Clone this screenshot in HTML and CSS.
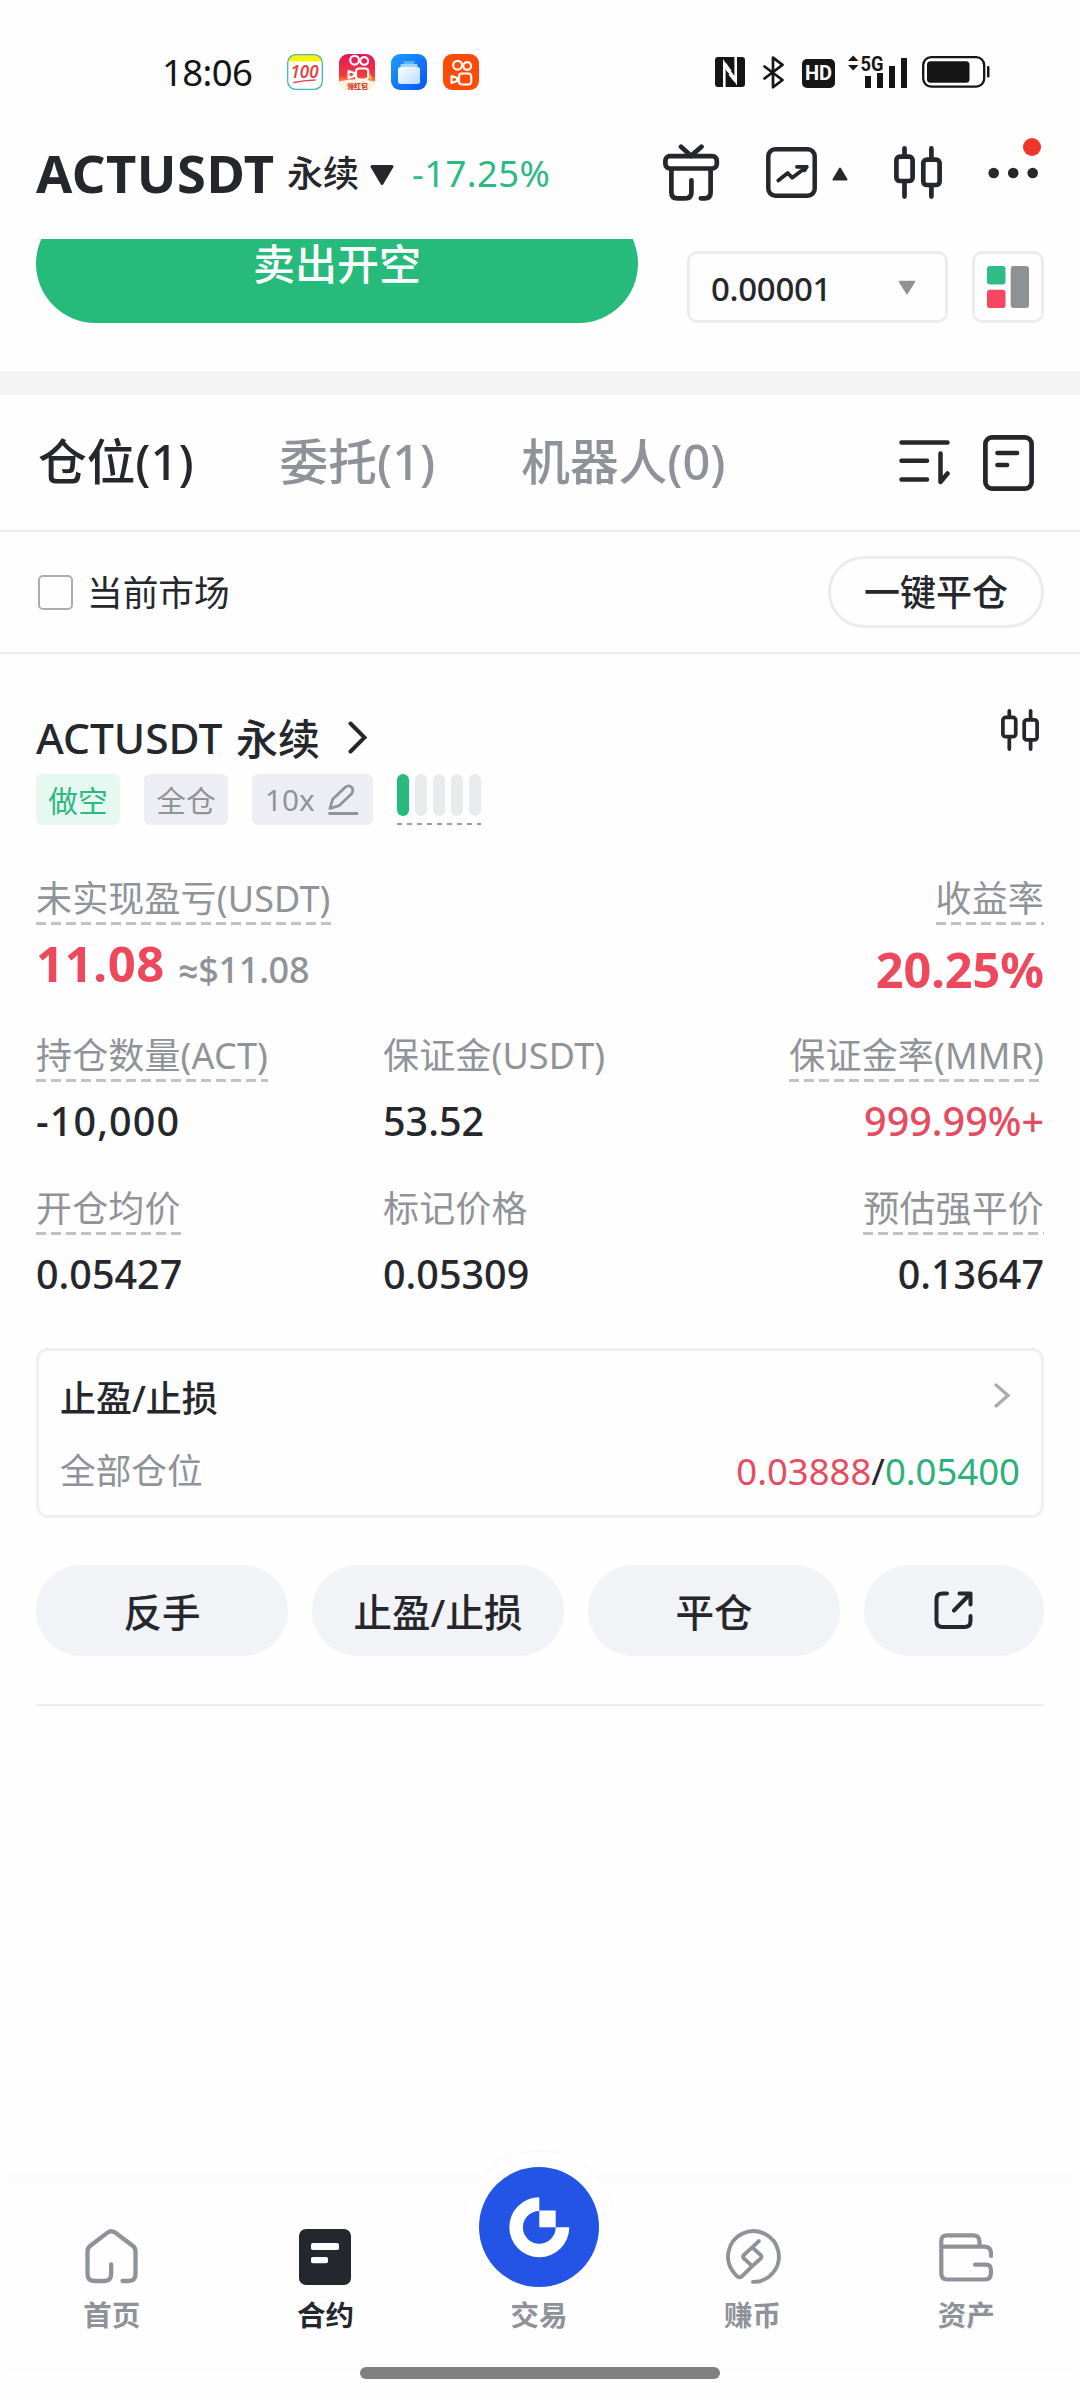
FILE: index.html
```html
<!DOCTYPE html>
<html lang="zh-CN">
<head>
<meta charset="utf-8">
<title>ACTUSDT 永续</title>
<link rel="stylesheet" href="styles.css">
</head>
<body>
<svg class="defs" width="0" height="0" aria-hidden="true">
  <symbol id="candles" viewBox="0 0 48 53">
    <g fill="none" stroke="currentColor" stroke-width="4.7" stroke-linecap="round">
      <rect x="2.4" y="10.6" width="16.2" height="24.4" rx="3.5"/>
      <rect x="29.3" y="13.6" width="16.3" height="25.4" rx="3.5"/>
      <path d="M10.5 2.4V9M10.5 37v13.6M37.4 2.4V12M37.4 41v9.6"/>
    </g>
  </symbol>
  <symbol id="camera" viewBox="0 0 36 35">
    <g fill="none" stroke="#fff" stroke-width="2.2" stroke-linejoin="round">
      <circle cx="14.6" cy="10.2" r="4.4"/>
      <circle cx="24.2" cy="11" r="3.9"/>
      <rect x="16" y="18.500" width="12.2" height="11" rx="3"/>
      <path d="M8.600 21v7l5.600-2v-3z"/>
    </g>
  </symbol>
</svg>

<div class="status">
  <span class="clock">18:06</span>
  <div class="apps">
    <svg width="36" height="36" viewBox="0 0 36 36">
      <rect x=".7" y=".7" width="34.6" height="34.6" rx="8" fill="#fff"/>
      <path d="M1 7.5V7a6.500 6.500 0 0 1 6.500-6.500h21A6.500 6.500 0 0 1 35 7v.5z" fill="#fbf500"/>
      <rect x=".7" y=".7" width="34.600" height="34.600" rx="8" fill="none" stroke="#45b5be" stroke-width="1.300"/>
      <text class="hundred" x="17.500" y="24" text-anchor="middle">100</text>
      <path d="M7 28.500q10-2 21-2.500" fill="none" stroke="#e04848" stroke-width="1.500" stroke-linecap="round"/>
    </svg>
    <svg width="36" height="36" viewBox="0 0 36 36">
      <defs><linearGradient id="gr" x1="0" y1="0" x2="0" y2="1"><stop offset="0" stop-color="#e6145a"/><stop offset=".6" stop-color="#f23a3c"/><stop offset=".8" stop-color="#fb9a4c"/></linearGradient></defs>
      <rect width="36" height="36" rx="9" fill="url(#gr)"/>
      <path d="M0 27.500q18-4.500 36 0a9 8 0 0 1-9 8.500H9a9 8 0 0 1-9-8.500z" fill="#fff3e0"/>
      <use href="#camera" x="1" y="-4" width="36" height="35"/>
      <path d="M32 20l-3 4h2l-1 3 4-4h-2z" fill="#ffc23c"/>
      <text class="tiny" x="18.500" y="34.500" text-anchor="middle">领红包</text>
    </svg>
    <svg width="36" height="36" viewBox="0 0 36 36">
      <defs>
        <linearGradient id="gb" x1="0" y1="0" x2="1" y2="1"><stop offset="0" stop-color="#1f9dfc"/><stop offset="1" stop-color="#0a53fb"/></linearGradient>
        <linearGradient id="gw" x1="0" y1="0" x2="1" y2="1"><stop offset="0" stop-color="#fff"/><stop offset="1" stop-color="#b9dcff"/></linearGradient>
      </defs>
      <rect width="36" height="36" rx="9" fill="url(#gb)"/>
      <rect x="12.500" y="7" width="11" height="3" rx="1" fill="#5cb4fd"/>
      <rect x="9.500" y="10" width="17" height="3" rx="1" fill="#a5d4fe"/>
      <rect x="7" y="13" width="22" height="17" rx="2.500" fill="url(#gw)"/>
    </svg>
    <svg width="36" height="36" viewBox="0 0 36 36">
      <rect width="36" height="36" rx="9" fill="#fc4b08"/>
      <use href="#camera" width="36" height="35" y="1"/>
    </svg>
  </div>
  <div class="signals">
    <svg width="30" height="30" viewBox="0 0 30 30">
      <rect width="30" height="30" rx="3" fill="#151515"/>
      <path d="M9.300 30V6.500L20.700 24V0" fill="none" stroke="#fefefe" stroke-width="2.600"/>
      <path d="M9.300 7l5.700 8M15 16.500l5.700 7" stroke="#fefefe" stroke-width="4"/>
    </svg>
    <svg class="bt" width="22" height="33" viewBox="0 0 22 33">
      <path d="M1.500 10.500L19.500 24 10 31.300V1.700l9.500 7.200L1.500 22.500" fill="none" stroke="#151515" stroke-width="2.700" stroke-linejoin="round" stroke-linecap="round"/>
    </svg>
    <span class="hd">HD</span>
    <svg class="cell" width="62" height="45" viewBox="0 -6 62 45">
      <path d="M2 6l5.200-5.500L12.500 6zM2 10l5.200 5.500L12.500 10z" fill="#151515"/>
      <text class="gen" x="14.500" y="15.500" textLength="23" lengthAdjust="spacingAndGlyphs">5G</text>
      <path d="M19 21h6v12h-6zM31 18h6v15h-6zM43 11h6v22h-6zM55 3h6v30h-6z" fill="#151515"/>
    </svg>
    <svg width="68" height="32" viewBox="0 0 68 32">
      <rect x="1.200" y="1.200" width="61" height="29.400" rx="8" fill="none" stroke="#151515" stroke-width="2.300"/>
      <rect x="5" y="5.300" width="42.500" height="21.400" rx="3.500" fill="#151515"/>
      <rect x="65" y="10" width="2.500" height="11.500" rx="1" fill="#151515"/>
    </svg>
  </div>
</div>

<div class="header">
  <span class="symbol">ACTUSDT</span>
  <span class="kind">永续</span>
  <svg class="caret" width="26" height="22" viewBox="0 0 26 22"><path d="M3 2.500h20L13 19.500z" fill="currentColor" stroke="currentColor" stroke-width="3" stroke-linejoin="round"/></svg>
  <span class="change">-17.25%</span>
  <svg class="gift" width="57" height="58" viewBox="0 0 57 58" fill="none" stroke="currentColor" stroke-width="4.700" stroke-linecap="round">
    <rect x="2.400" y="12.200" width="51.400" height="12.300" rx="4.500"/>
    <path d="M18 2.800l10 9 10.500-9M8.400 26v22.500q0 5.800 6 5.800h8q6 0 6-5.800V36.300M47.600 26v22.500q0 5.800-6 5.800h-3.800"/>
  </svg>
  <svg class="chart" width="51" height="51" viewBox="0 0 51 51" fill="none" stroke="currentColor" stroke-width="4.500" stroke-linecap="round" stroke-linejoin="round">
    <rect x="2.300" y="2.300" width="46.400" height="46.400" rx="7"/>
    <path stroke-width="3.800" d="M12.300 33.500l9.400-7.500 4.500 4.800L40.800 19.800H31M40.800 19.800l-2.300 3.500"/>
  </svg>
  <svg class="up" width="16" height="14" viewBox="0 0 16 14"><path d="M8 1.500l6.500 11h-13z" fill="currentColor" stroke="currentColor" stroke-width="2" stroke-linejoin="round"/></svg>
  <svg class="candle-icon" width="48" height="53"><use href="#candles" width="48" height="53"/></svg>
  <div class="more">
    <svg width="51" height="12" viewBox="0 0 51 12"><g fill="currentColor"><circle cx="5.700" cy="6" r="5.300"/><circle cx="25.200" cy="6" r="5.300"/><circle cx="44.700" cy="6" r="5.300"/></g></svg>
    <span class="badge"></span>
  </div>
</div>

<div class="trade">
  <div class="sell"><span>卖出开空</span></div>
  <div class="precision"><span>0.00001</span><svg width="18" height="15" viewBox="0 0 18 15"><path d="M1.500 1.500h15L9 13.500z" fill="#8e9297" stroke="#8e9297" stroke-width="1.500" stroke-linejoin="round"/></svg></div>
  <div class="bookmode">
    <svg width="42" height="42" viewBox="0 0 42 42"><rect width="18.500" height="18.500" rx="3" fill="#2ebd85"/><rect y="23.700" width="18.500" height="18.500" rx="3" fill="#f5475d"/><rect x="23.700" width="18.300" height="42" rx="3" fill="#8e9297"/></svg>
  </div>
</div>

<div class="band"></div>

<div class="tabs">
  <span class="tab active">仓位(1)</span>
  <span class="tab">委托(1)</span>
  <span class="tab">机器人(0)</span>
  <svg class="sort" width="51" height="47" viewBox="0 0 51 47" fill="none" stroke="currentColor" stroke-width="4.500" stroke-linecap="round" stroke-linejoin="round"><path d="M2.500 3.500h46M2.500 21.800H28M2.500 40.500H28M41.500 14.500v28.500l7-8.500"/></svg>
  <svg class="doc" width="51" height="56" viewBox="0 0 51 56" fill="none" stroke="currentColor" stroke-width="4.700" stroke-linecap="round"><rect x="2.400" y="2.400" width="46.200" height="51.200" rx="6.500"/><path d="M14.500 18H34M14.500 30H24"/></svg>
</div>

<div class="filter">
  <span class="check"></span>
  <span class="filter-label">当前市场</span>
  <span class="closeall">一键平仓</span>
</div>

<div class="position">
  <div class="title">
    <span class="name">ACTUSDT</span><span class="type">永续</span>
    <svg class="chev" width="20" height="33" viewBox="0 0 20 33"><path d="M2.500 2.500L16.500 16.500 2.500 30.500" fill="none" stroke="currentColor" stroke-width="4" stroke-linecap="round"/></svg>
    <svg class="mini" width="38" height="42"><use href="#candles" width="38" height="42"/></svg>
  </div>
  <div class="tags">
    <span class="tag short">做空</span>
    <span class="tag">全仓</span>
    <span class="tag lever">10x
      <svg width="31" height="32" viewBox="0 0 31 32" fill="none" stroke="currentColor" stroke-width="2.800" stroke-linecap="round" stroke-linejoin="round"><path d="M2 24.500l2.600-9.200L17.300 3.200q3.500-2.700 6.300 0 2.400 3 0 6.500L11 21.700zM1.500 29.500h27.500"/></svg>
    </span>
    <span class="risk"><i class="on"></i><i></i><i></i><i></i><i></i></span>
  </div>

  <div class="metrics first">
    <div class="metric"><span class="label dash">未实现盈亏(USDT)</span><span class="pnl"><b>11.08</b><span class="approx"><span class="sign">≈</span>$11.08</span></span></div>
    <div class="metric right"><span class="label dash">收益率</span><span class="roe">20.25%</span></div>
  </div>
  <div class="metrics">
    <div class="metric"><span class="label dash">持仓数量(ACT)</span><span class="value qty">-10,000</span></div>
    <div class="metric"><span class="label">保证金(USDT)</span><span class="value">53.52</span></div>
    <div class="metric right"><span class="label dash">保证金率(MMR)</span><span class="value red">999.99%+</span></div>
  </div>
  <div class="metrics">
    <div class="metric"><span class="label dash">开仓均价</span><span class="value">0.05427</span></div>
    <div class="metric"><span class="label">标记价格</span><span class="value">0.05309</span></div>
    <div class="metric right"><span class="label dash">预估强平价</span><span class="value">0.13647</span></div>
  </div>

  <div class="tpsl">
    <div class="row"><span class="strong">止盈/止损</span><svg class="go" width="17" height="25" viewBox="0 0 17 25"><path d="M2 2l12 10.500L2 23" fill="none" stroke="#a9abae" stroke-width="3.200" stroke-linecap="round"/></svg></div>
    <div class="row"><span class="muted">全部仓位</span><span class="prices"><span class="red">0.03888</span>/<span class="green">0.05400</span></span></div>
  </div>

  <div class="actions">
    <span class="btn">反手</span>
    <span class="btn">止盈/止损</span>
    <span class="btn">平仓</span>
    <span class="btn share">
      <svg width="40" height="39" viewBox="0 0 40 39" fill="none" stroke="currentColor" stroke-width="4" stroke-linecap="round" stroke-linejoin="round"><path d="M13 2.500H8.500q-6 0-6 6V30q0 6 6 6h22q6 0 6-6v-5M20 19.500L36.500 2.500M25.500 2.500h11v11"/></svg>
    </span>
  </div>
</div>

<div class="nav">
  <div class="item">
    <svg width="53" height="56" viewBox="0 0 53 56" fill="none" stroke="currentColor" stroke-width="4.300" stroke-linecap="round"><path d="M26.200 35.500V45q0 7-7 7H9.500q-7 0-7-7V22.500q0-3.500 2.500-5.500L22.500 3.600q3.800-2.800 7.600 0L48 17q2.500 2 2.500 5.500V45q0 7-7 7h-6"/></svg>
    <span>首页</span>
  </div>
  <div class="item current">
    <svg width="52" height="56" viewBox="0 0 52 56"><rect width="52" height="56" rx="7" fill="currentColor"/><rect x="12" y="14" width="28" height="7" rx="1.800" fill="#fefefe"/><rect x="12" y="28" width="17" height="6.300" rx="1.800" fill="#fefefe"/></svg>
    <span>合约</span>
  </div>
  <div class="item center">
    <div class="fab">
      <svg width="120" height="120" viewBox="0 0 120 120"><circle cx="60" cy="60" r="60" fill="#2354e6"/><path d="M60.300 30.300v13.600a16.400 16.400 0 1 0 16.400 16.400h13.600a30 30 0 1 1-30-30z" fill="#fff"/><path d="M60.300 43.500h16.400v16.800H60.300z" fill="#fff"/></svg>
    </div>
    <span>交易</span>
  </div>
  <div class="item">
    <svg width="58" height="58" viewBox="0 0 58 58" fill="none" stroke="currentColor" stroke-width="4" stroke-linecap="round" stroke-linejoin="round"><path d="M29 54.800A26.300 26.300 0 1 0 9 45l3 3.500q2.500 2.500 5.500.5L28.200 38.500 19.500 30.500q-1.600-1.800 0-3.600L28.200 19 37 26.900q1.600 1.800 0 3.600L28.200 38.500M28.200 19l6.800-6.500"/></svg>
    <span>赚币</span>
  </div>
  <div class="item">
    <svg width="54" height="56" viewBox="0 -4 54 56" fill="none" stroke="currentColor" stroke-width="4.200" stroke-linecap="round"><path d="M2.300 13.700V8q0-5.700 5.700-5.700h26q6.500 0 6.500 6.500v4.900M2.300 13.700H45q7 0 7 6.500V23M2.300 13.700v26.500q0 6.300 6.300 6.300h37q6.300 0 6.300-6.300v-3.500q0-5-5-5H36"/></svg>
    <span>资产</span>
  </div>
</div>
<div class="home"></div>
</body>
</html>
```
FILE: styles.css
```css
* { box-sizing: border-box; }
body {
  margin: 0;
  width: 1080px;
  height: 2400px;
  display: flex;
  flex-direction: column;
  overflow: hidden;
  background: #fefefe;
  color: #25272c;
  font-family: "Noto Sans", "Noto Sans CJK SC", sans-serif;
  font-size: 36px;
  line-height: 1;
  white-space: nowrap;
}
svg { display: block; flex: none; }
.defs { position: absolute; }

.status {
  height: 108px;
  padding: 36px 90px 0 162px;
  display: flex;
  align-items: center;
}
.clock { width: 125px; font-size: 36.500px; letter-spacing: -.6px; color: #151515; }
.apps { display: flex; gap: 16px; }
.hundred { font: italic 600 17px "Noto Sans", sans-serif; fill: #e04848; }
.tiny { font: 900 7px "Noto Sans CJK SC", sans-serif; fill: #d63a28; }
.signals { margin-left: auto; display: flex; align-items: center; }
.bt { margin-left: 18px; }
.hd {
  width: 33px;
  height: 29px;
  margin: 2px 0 0 17px;
  border-radius: 5px;
  background: #151515;
  color: #fefefe;
  font: bold 20px/29px "Roboto", sans-serif;
  text-align: center;
}
.cell { margin: -1px 14px 0 11px; }
.gen { font: bold 21px "Roboto", sans-serif; fill: #151515; }

.header {
  height: 131px;
  padding: 0 36px;
  display: flex;
  align-items: center;
}
.symbol { width: 251px; font-size: 52.500px; font-weight: 700; letter-spacing: .5px; }
.kind { width: 82px; font-size: 36px; font-weight: 500; }
.caret { margin-top: 3px; }
.change { margin-left: 17px; width: 251px; font-size: 36.500px; letter-spacing: .4px; color: #2db983; }
.gift, .candle-icon { margin-top: -2px; }
.chart { margin: -2px 0 0 46px; }
.up { margin-left: 15px; }
.candle-icon { margin-left: 46px; }
.more { position: relative; margin: -2px 0 0 46px; }
.badge {
  position: absolute;
  left: 35px;
  top: -29px;
  width: 18px;
  height: 18px;
  border-radius: 50%;
  background: #ee3727;
}

.trade {
  height: 132px;
  padding: 0 36px;
  display: flex;
  align-items: flex-start;
  overflow: hidden;
}
.sell {
  width: 602px;
  height: 119px;
  margin: -35px 49px 0 0;
  border-radius: 60px;
  background: #26ba7b;
  color: #fff;
  font-size: 42px;
  font-weight: 500;
  display: flex;
  align-items: center;
  justify-content: center;
}
.precision, .bookmode {
  height: 72px;
  margin-top: 12px;
  border: 3px solid #ececec;
  border-radius: 10px;
  display: flex;
  align-items: center;
}
.precision {
  width: 261px;
  padding: 0 29px 0 21px;
  justify-content: space-between;
  font-size: 33px;
}
.precision span { padding-top: 2px; letter-spacing: -.3px; font-weight: 500; }
.bookmode { width: 72px; margin-left: 24px; justify-content: center; }

.band { height: 24px; background: #f4f4f7; }

.tabs {
  height: 137px;
  padding: 0 46px 0 38px;
  border-bottom: 2px solid #ededed;
  display: flex;
  align-items: center;
  font-size: 48.700px;
}
.tab { margin: -3px 86px 0 0; color: #8f9399; font-weight: 500; }
.tab.active { color: #25272c; }
.sort { margin-left: auto; }
.doc { margin-left: 33px; }
.tab:nth-of-type(3) { margin-right: 0; }

.filter {
  height: 122px;
  padding: 0 36px 0 38px;
  border-bottom: 2px solid #ededed;
  display: flex;
  align-items: center;
}
.check { width: 35px; height: 35px; border: 2.500px solid #adadad; border-radius: 5px; }
.filter-label { margin: 2px 0 0 14px; font-size: 35.700px; }
.closeall {
  width: 216px;
  height: 72px;
  margin-left: auto;
  border: 3px solid #ececec;
  border-radius: 36px;
  text-align: center;
  font-weight: 500;
  line-height: 68px;
}

.position { padding: 47px 36px 0; }
.title {
  height: 73px;
  display: flex;
  align-items: center;
  font-size: 42.500px;
  font-weight: 500;
}
.name { width: 200px; padding-top: 1px; }
.type { width: 112px; padding-top: 3px; font-size: 42px; }
.mini { margin: 8px 5px 0 auto; align-self: flex-start; }
.tags { display: flex; height: 51px; }
.tag {
  width: 84px;
  height: 51px;
  margin-right: 24px;
  border-radius: 6px;
  background: #edeef4;
  color: #909398;
  font-size: 29.700px;
  line-height: 53px;
  text-align: center;
}
.tag.short { background: #e7f8f0; color: #2db983; }
.tag.lever {
  width: 121px;
  padding: 0 14px 0 13px;
  display: flex;
  align-items: center;
  justify-content: space-between;
}
.risk {
  width: 84px;
  display: flex;
  gap: 6px;
  background: repeating-linear-gradient(90deg, #9a9da1 0 5px, transparent 5px 10px) 0 100% / 100% 2px no-repeat;
}
.risk i { width: 12px; height: 42px; border-radius: 6px; background: #e9eaec; }
.risk .on { background: #26ba7b; }

.metrics { display: grid; grid-template-columns: 347px 1fr auto; margin-bottom: 31px; }
.metrics.first { grid-template-columns: 1fr auto; margin: 54px 0 35px; }
.metric { display: flex; flex-direction: column; align-items: flex-start; }
.metric.right { align-items: flex-end; }
.label { height: 46px; line-height: 39px; color: #909499; font-size: 36px; letter-spacing: .15px; }
.dash { background: repeating-linear-gradient(90deg, #bfc2c6 0 10px, transparent 10px 15px) 0 100% / 100% 3px no-repeat; }
.value { height: 76px; line-height: 78px; font-size: 39.500px; font-weight: 500; }
.qty { letter-spacing: 1.100px; }
.red { color: #e64c61; }
.green { color: #2db07c; }
.pnl { height: 76px; display: flex; line-height: 77px; }
.pnl b { width: 142px; font-size: 49px; letter-spacing: .6px; color: #ee485c; }
.approx { padding-top: 8px; line-height: 68px; padding-top: 11px; color: #8f9399; font-size: 36px; font-weight: 500; letter-spacing: -.3px; }
.sign { font-family: "Roboto", sans-serif; }
.roe { height: 76px; line-height: 89px; font-size: 48.500px; font-weight: 700; color: #ee485c; }

.tpsl {
  height: 170px;
  margin-top: 37px;
  padding: 11px 21px 0;
  border: 3px solid #eeefef;
  border-radius: 12px;
}
.row { height: 72.500px; display: flex; align-items: center; justify-content: space-between; }
.strong { padding-top: 2px; font-weight: 500; }
.muted { color: #8f9399; font-size: 35.700px; }
.go { margin: -5px 9px 0 0; }
.prices { font-size: 36.500px; }

.actions { margin-top: 47px; display: grid; grid-template-columns: 252px 252px 252px 180px; gap: 24px; padding-bottom: 48px; border-bottom: 2px solid #ededed; }
.btn {
  height: 91px;
  border-radius: 46px;
  background: #f1f3f7;
  padding-top: 3px;
  display: flex;
  align-items: center;
  justify-content: center;
  font-size: 38.500px;
  font-weight: 500;
}
.share { padding-top: 0; }

.nav {
  height: 186px;
  margin-top: auto;
  padding: 48px 7px 0 5px;
  display: grid;
  grid-template-columns: repeat(5, 1fr);
  background: #fefefe;
  box-shadow: 0 -2px 10px rgba(0, 0, 0, .025);
}
.item {
  display: flex;
  flex-direction: column;
  align-items: center;
  color: #8f9399;
  font-size: 28.500px;
  font-weight: 700;
}
.item svg { height: 56px; }
.item span { margin-top: 15px; line-height: 30px; }
.item.current { color: #25272f; }
.item .fab {
  width: 150px;
  height: 150px;
  margin: -77px 0 -17px;
  border-radius: 50%;
  padding: 15px;
  background: #fefefe;
  box-shadow: 0 -3px 6px -2px rgba(0, 0, 0, .03);
}
.fab svg { height: 120px; }
.home {
  width: 360px;
  height: 12px;
  margin: 0 auto 21px;
  border-radius: 6px;
  background: #808080;
}
```
